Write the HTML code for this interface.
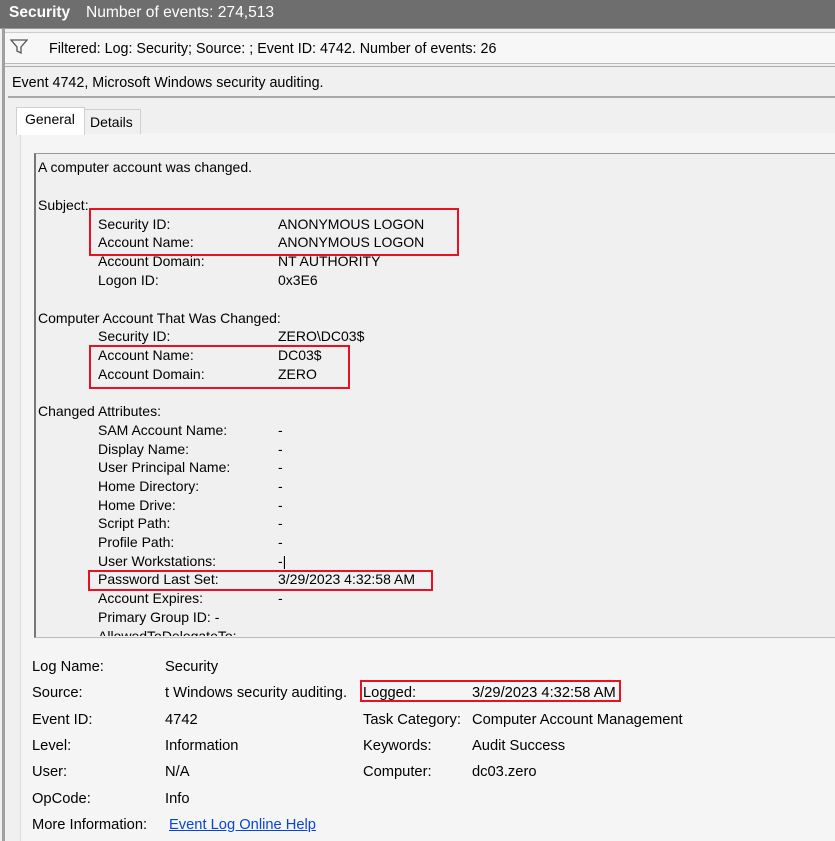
<!DOCTYPE html><html><head><style>
body{margin:0;width:835px;height:841px;overflow:hidden;background:#f0f0f0;font-family:"Liberation Sans",Arial,sans-serif;font-size:14px;color:#000;position:relative}
.a{position:absolute;white-space:nowrap;line-height:18px}
.b .a{font-size:14.7px}
.r{position:absolute;border:2px solid #e81123}
</style></head><body>
<div style="position:absolute;left:0;top:0;width:835px;height:28px;background:#6e6e6e;border-bottom:1px solid #9a9a9a"></div>
<div class="a" style="left:9px;top:4px;color:#fff;font-weight:bold;font-size:15.5px">Security</div>
<div class="a" style="left:86px;top:4px;color:#fff;font-size:15.6px">Number of events: 274,513</div>
<div style="position:absolute;left:2px;top:29px;width:3px;height:812px;background:#a0a0a0"></div>
<div style="position:absolute;left:5px;top:32px;width:830px;height:30px;background:#f7f7f7;border-top:1px solid #ccc;border-bottom:1px solid #bbb"></div>
<svg style="position:absolute;left:10px;top:39px" width="18" height="16"><path d="M1 1H17L11 8V14L7 12V8Z" fill="none" stroke="#555" stroke-width="1.3"/></svg>
<div class="a" style="left:49px;top:40px;font-size:14.3px">Filtered: Log: Security; Source: ; Event ID: 4742. Number of events: 26</div>
<div style="position:absolute;left:5px;top:66px;width:830px;height:1px;background:#aaa"></div>
<div class="a" style="left:12px;top:74px;font-size:14.3px">Event 4742, Microsoft Windows security auditing.</div>
<div style="position:absolute;left:8px;top:96px;width:827px;height:2px;background:#a8a8a8"></div>
<div style="position:absolute;left:20px;top:133px;width:815px;height:708px;background:#f5f5f5;border-left:1px solid #ddd"></div>
<div style="position:absolute;left:16px;top:107px;width:67px;height:27px;background:#fff;border:1px solid #d0d0d0;border-bottom:none"></div>
<div class="a" style="left:25px;top:110px">General</div>
<div style="position:absolute;left:84px;top:109px;width:55px;height:24px;background:#f0f0f0;border:1px solid #d0d0d0;border-bottom:none"></div>
<div class="a" style="left:90px;top:113px">Details</div>
<div style="position:absolute;left:34px;top:153px;width:801px;height:483px;background:#f0f0f0;border-left:2px solid #777;border-top:1px solid #999;border-bottom:1px solid #bbb"></div>
<div class="a" style="left:38px;top:158px">A computer account was changed.</div>
<div class="a" style="left:38px;top:196px">Subject:</div>
<div class="a" style="left:98px;top:215px">Security ID:</div><div class="a" style="left:278px;top:215px">ANONYMOUS LOGON</div>
<div class="a" style="left:98px;top:233px">Account Name:</div><div class="a" style="left:278px;top:233px">ANONYMOUS LOGON</div>
<div class="a" style="left:98px;top:252px">Account Domain:</div><div class="a" style="left:278px;top:252px">NT AUTHORITY</div>
<div class="a" style="left:98px;top:271px">Logon ID:</div><div class="a" style="left:278px;top:271px">0x3E6</div>
<div class="a" style="left:38px;top:309px">Computer Account That Was Changed:</div>
<div class="a" style="left:98px;top:327px">Security ID:</div><div class="a" style="left:278px;top:327px">ZERO\DC03$</div>
<div class="a" style="left:98px;top:346px">Account Name:</div><div class="a" style="left:278px;top:346px">DC03$</div>
<div class="a" style="left:98px;top:365px">Account Domain:</div><div class="a" style="left:278px;top:365px">ZERO</div>
<div class="a" style="left:38px;top:402px">Changed Attributes:</div>
<div class="a" style="left:98px;top:421px">SAM Account Name:</div><div class="a" style="left:278px;top:421px">-</div>
<div class="a" style="left:98px;top:440px">Display Name:</div><div class="a" style="left:278px;top:440px">-</div>
<div class="a" style="left:98px;top:458px">User Principal Name:</div><div class="a" style="left:278px;top:458px">-</div>
<div class="a" style="left:98px;top:477px">Home Directory:</div><div class="a" style="left:278px;top:477px">-</div>
<div class="a" style="left:98px;top:496px">Home Drive:</div><div class="a" style="left:278px;top:496px">-</div>
<div class="a" style="left:98px;top:514px">Script Path:</div><div class="a" style="left:278px;top:514px">-</div>
<div class="a" style="left:98px;top:533px">Profile Path:</div><div class="a" style="left:278px;top:533px">-</div>
<div class="a" style="left:98px;top:552px">User Workstations:</div><div class="a" style="left:278px;top:552px">-|</div>
<div class="a" style="left:98px;top:570px">Password Last Set:</div><div class="a" style="left:278px;top:570px">3/29/2023 4:32:58 AM</div>
<div class="a" style="left:98px;top:589px">Account Expires:</div><div class="a" style="left:278px;top:589px">-</div>
<div class="a" style="left:98px;top:608px">Primary Group ID: -</div>
<div style="position:absolute;left:36px;top:626px;width:799px;height:10px;overflow:hidden"><div class="a" style="left:62px;top:1px">AllowedToDelegateTo:</div></div>
<div class="r" style="left:89px;top:208px;width:366px;height:44px"></div>
<div class="r" style="left:89px;top:345px;width:257px;height:40px"></div>
<div class="r" style="left:88px;top:570px;width:341px;height:17px"></div>
<div class="r" style="left:360px;top:680px;width:257px;height:18px"></div>
<div class="b">
<div class="a" style="left:32px;top:658px">Log Name:</div><div class="a" style="left:165px;top:658px">Security</div>
<div class="a" style="left:32px;top:684px">Source:</div><div class="a" style="left:165px;top:684px">t Windows security auditing.</div>
<div class="a" style="left:363px;top:684px">Logged:</div><div class="a" style="left:472px;top:684px">3/29/2023 4:32:58 AM</div>
<div class="a" style="left:32px;top:711px">Event ID:</div><div class="a" style="left:165px;top:711px">4742</div>
<div class="a" style="left:363px;top:711px">Task Category:</div><div class="a" style="left:472px;top:711px">Computer Account Management</div>
<div class="a" style="left:32px;top:737px">Level:</div><div class="a" style="left:165px;top:737px">Information</div>
<div class="a" style="left:363px;top:737px">Keywords:</div><div class="a" style="left:472px;top:737px">Audit Success</div>
<div class="a" style="left:32px;top:763px">User:</div><div class="a" style="left:165px;top:763px">N/A</div>
<div class="a" style="left:363px;top:763px">Computer:</div><div class="a" style="left:472px;top:763px">dc03.zero</div>
<div class="a" style="left:32px;top:790px">OpCode:</div><div class="a" style="left:165px;top:790px">Info</div>
<div class="a" style="left:32px;top:816px">More Information:</div><div class="a" style="left:169px;top:816px;color:#0645d6;text-decoration:underline">Event Log Online Help</div>
</div>
</body></html>
